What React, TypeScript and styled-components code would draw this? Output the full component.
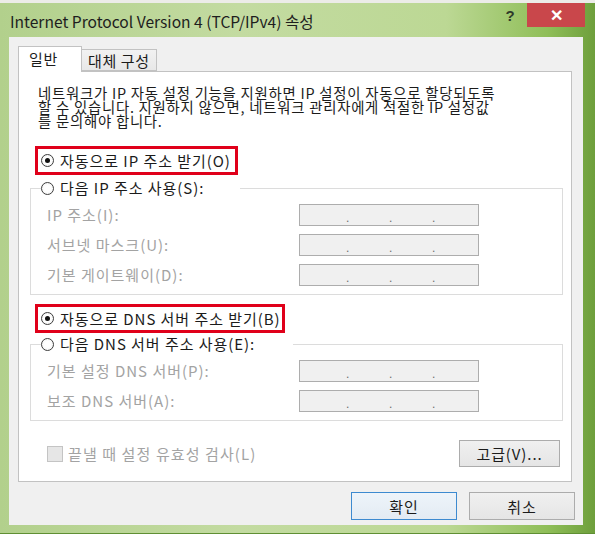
import React from "react";
import styled, { createGlobalStyle } from "styled-components";

const FONT = `"Noto Sans CJK KR", "Noto Sans", sans-serif`;

const Global = createGlobalStyle`
  html, body { margin: 0; padding: 0; background: #ffffff; }
  body { font-family: ${FONT}; }
`;

const Window = styled.div`
  position: relative;
  width: 595px;
  height: 534px;
  box-sizing: border-box;
  display: flex;
  flex-direction: column;
  padding-top: 3px;
  background: linear-gradient(90deg, #b2d08c 0%, #c3dba1 40%, #bcd894 75%, #8fbe58 92%, #6e9f3c 100%);
  border-bottom: 1px solid #5f8f33;
  font-family: ${FONT};
  color: #1b1b1b;
`;

const TopStrip = styled.div`
  position: absolute;
  top: 0;
  left: 0;
  width: 595px;
  height: 3px;
  background: #ecece8;
`;

const TitleBar = styled.div`
  height: 34px;
  display: flex;
  align-items: flex-start;
  padding: 0 10px 0 10px;
`;

const Title = styled.div`
  flex: 1;
  font-size: 15.6px;
  line-height: 20px;
  padding-top: 8px;
  color: #1e1e1e;
  white-space: nowrap;
`;

const HelpButton = styled.div`
  width: 34px;
  height: 24px;
  display: flex;
  align-items: center;
  justify-content: center;
  font-family: "Liberation Sans", sans-serif;
  font-weight: bold;
  font-size: 15px;
  color: #2f3a2a;
`;

const CloseButton = styled.div`
  width: 58px;
  height: 24px;
  display: flex;
  align-items: center;
  justify-content: center;
  background: #c9474b;
  color: #ffffff;
  font-family: "Liberation Sans", sans-serif;
  font-weight: bold;
  font-size: 16px;
`;

const Client = styled.div`
  flex: 1;
  margin: 0 12px 8px 9px;
  background: #f0f0f0;
  padding: 9px 8px 5px 9px;
  display: flex;
  flex-direction: column;
`;

const Tabs = styled.div`
  height: 25px;
  display: flex;
  align-items: flex-end;
`;

const Tab = styled.div<{ $active?: boolean }>`
  box-sizing: border-box;
  display: flex;
  align-items: center;
  font-size: 15px;
  letter-spacing: 0.6px;
  color: #1b1b1b;
  border: 1px solid #c2c2c2;
  ${(p) =>
    p.$active
      ? `width: 64px; height: 26px; margin-bottom: -1px; background: #ffffff; border-bottom: none; position: relative; z-index: 1; padding: 0 0 3px 10px;`
      : `width: 75px; height: 22px; background: linear-gradient(#f2f2f2, #e8e8e8); border-left: none; padding: 0 0 0 6px;`}
`;

const Panel = styled.div`
  height: 411px;
  box-sizing: border-box;
  margin-right: 3px;
  background: #ffffff;
  border: 1px solid #c2c2c2;
  padding: 14px 8px 0 11px;
  display: flex;
  flex-direction: column;
`;

const Description = styled.div`
  margin-left: 8px;
  font-size: 14.4px;
  line-height: 13.8px;
  letter-spacing: 0.75px;
  color: #1b1b1b;
  white-space: nowrap;
`;

const Highlight = styled.div<{ $width: number; $top: number }>`
  box-sizing: border-box;
  width: ${(p) => p.$width}px;
  height: 29px;
  margin: ${(p) => p.$top}px 0 0 5px;
  border: 3px solid #e0001a;
  display: flex;
  align-items: center;
  padding-left: 3px;
`;

const RadioRow = styled.label`
  display: flex;
  align-items: center;
  gap: 6px;
  font-size: 15px;
  line-height: 20px;
  letter-spacing: 0.95px;
  color: #1b1b1b;
  white-space: nowrap;
`;

const RadioCircle = styled.span<{ $checked?: boolean }>`
  box-sizing: border-box;
  width: 13px;
  height: 13px;
  border-radius: 50%;
  border: 1px solid #3d3d3d;
  background: radial-gradient(circle, #ffffff 40%, #ececec 100%);
  display: flex;
  align-items: center;
  justify-content: center;
  flex: none;
  &::after {
    content: "";
    display: ${(p) => (p.$checked ? "block" : "none")};
    width: 5px;
    height: 5px;
    border-radius: 50%;
    background: #111111;
  }
`;

const Group = styled.fieldset<{ $top: number }>`
  margin: ${(p) => p.$top}px 0 0 0;
  padding: 0;
  border: 1px solid #dcdcdc;
  min-width: 0;
`;

const GroupLegend = styled.legend<{ $width: number }>`
  margin-left: 10px;
  padding: 0;
  width: ${(p) => p.$width}px;
  height: 20px;
  display: flex;
  align-items: center;
`;

const FieldGrid = styled.div`
  display: grid;
  grid-template-columns: 252px 180px;
  grid-auto-rows: 22px;
  row-gap: 8px;
  padding: 6px 0 8px 16px;
`;

const FieldLabel = styled.div`
  font-size: 15px;
  line-height: 22px;
  letter-spacing: 1px;
  color: #a3a3a3;
  white-space: nowrap;
`;

const IpBox = styled.div`
  box-sizing: border-box;
  width: 180px;
  height: 22px;
  border: 1px solid #adadad;
  background: #f0f0f0;
  display: flex;
  padding-left: 46px;
  gap: 39px;
`;

const IpDot = styled.span`
  font-family: "Liberation Sans", sans-serif;
  font-size: 12px;
  line-height: 26px;
  width: 4px;
  color: #6d6d6d;
`;

const BottomRow = styled.div`
  margin-top: 19px;
  display: flex;
  align-items: center;
  justify-content: space-between;
  padding: 0 3px 0 17px;
`;

const CheckRow = styled.div`
  display: flex;
  align-items: center;
  gap: 5px;
  font-size: 15px;
  letter-spacing: 1.1px;
  color: #a3a3a3;
  white-space: nowrap;
`;

const CheckBox = styled.span`
  box-sizing: border-box;
  width: 16px;
  height: 16px;
  background: #e6e6e6;
  border: 1px solid #c4c4c4;
`;

const Button = styled.button<{ $w: number; $h: number; $default?: boolean }>`
  box-sizing: border-box;
  width: ${(p) => p.$w}px;
  height: ${(p) => p.$h}px;
  font-family: ${FONT};
  font-size: 15px;
  letter-spacing: 0.9px;
  color: #1b1b1b;
  padding: 0;
  border: 1px solid ${(p) => (p.$default ? "#3d8ad0" : "#acacac")};
  background: ${(p) => (p.$default ? "linear-gradient(#eef4fa, #e3ebf3)" : "linear-gradient(#f0f0f0, #e5e5e5)")};
  display: flex;
  align-items: center;
  justify-content: center;
`;

const ButtonRow = styled.div`
  margin-top: 10px;
  display: flex;
  justify-content: flex-end;
  gap: 12px;
`;

const IpField = () => (
  <IpBox>
    <IpDot>.</IpDot>
    <IpDot>.</IpDot>
    <IpDot>.</IpDot>
  </IpBox>
);

export default function App() {
  return (
    <>
      <Global />
      <Window>
        <TopStrip />
        <TitleBar>
          <Title>Internet Protocol Version 4 (TCP/IPv4) 속성</Title>
          <HelpButton>?</HelpButton>
          <CloseButton>✕</CloseButton>
        </TitleBar>
        <Client>
          <Tabs>
            <Tab $active>일반</Tab>
            <Tab>대체 구성</Tab>
          </Tabs>
          <Panel>
            <Description>
              네트워크가 IP 자동 설정 기능을 지원하면 IP 설정이 자동으로 할당되도록
              <br />
              할 수 있습니다. 지원하지 않으면, 네트워크 관리자에게 적절한 IP 설정값
              <br />
              를 문의해야 합니다.
            </Description>
            <Highlight $width={203} $top={19}>
              <RadioRow>
                <RadioCircle $checked />
                자동으로 IP 주소 받기(O)
              </RadioRow>
            </Highlight>
            <Group $top={3}>
              <GroupLegend $width={199}>
                <RadioRow>
                  <RadioCircle />
                  다음 IP 주소 사용(S):
                </RadioRow>
              </GroupLegend>
              <FieldGrid>
                <FieldLabel>IP 주소(I):</FieldLabel>
                <IpField />
                <FieldLabel>서브넷 마스크(U):</FieldLabel>
                <IpField />
                <FieldLabel>기본 게이트웨이(D):</FieldLabel>
                <IpField />
              </FieldGrid>
            </Group>
            <Highlight $width={250} $top={9}>
              <RadioRow>
                <RadioCircle $checked />
                자동으로 DNS 서버 주소 받기(B)
              </RadioRow>
            </Highlight>
            <Group $top={1}>
              <GroupLegend $width={252}>
                <RadioRow>
                  <RadioCircle />
                  다음 DNS 서버 주소 사용(E):
                </RadioRow>
              </GroupLegend>
              <FieldGrid>
                <FieldLabel>기본 설정 DNS 서버(P):</FieldLabel>
                <IpField />
                <FieldLabel>보조 DNS 서버(A):</FieldLabel>
                <IpField />
              </FieldGrid>
            </Group>
            <BottomRow>
              <CheckRow>
                <CheckBox />
                끝낼 때 설정 유효성 검사(L)
              </CheckRow>
              <Button $w={101} $h={27}>고급(V)...</Button>
            </BottomRow>
          </Panel>
          <ButtonRow>
            <Button $w={106} $h={28} $default>확인</Button>
            <Button $w={106} $h={28}>취소</Button>
          </ButtonRow>
        </Client>
      </Window>
    </>
  );
}
